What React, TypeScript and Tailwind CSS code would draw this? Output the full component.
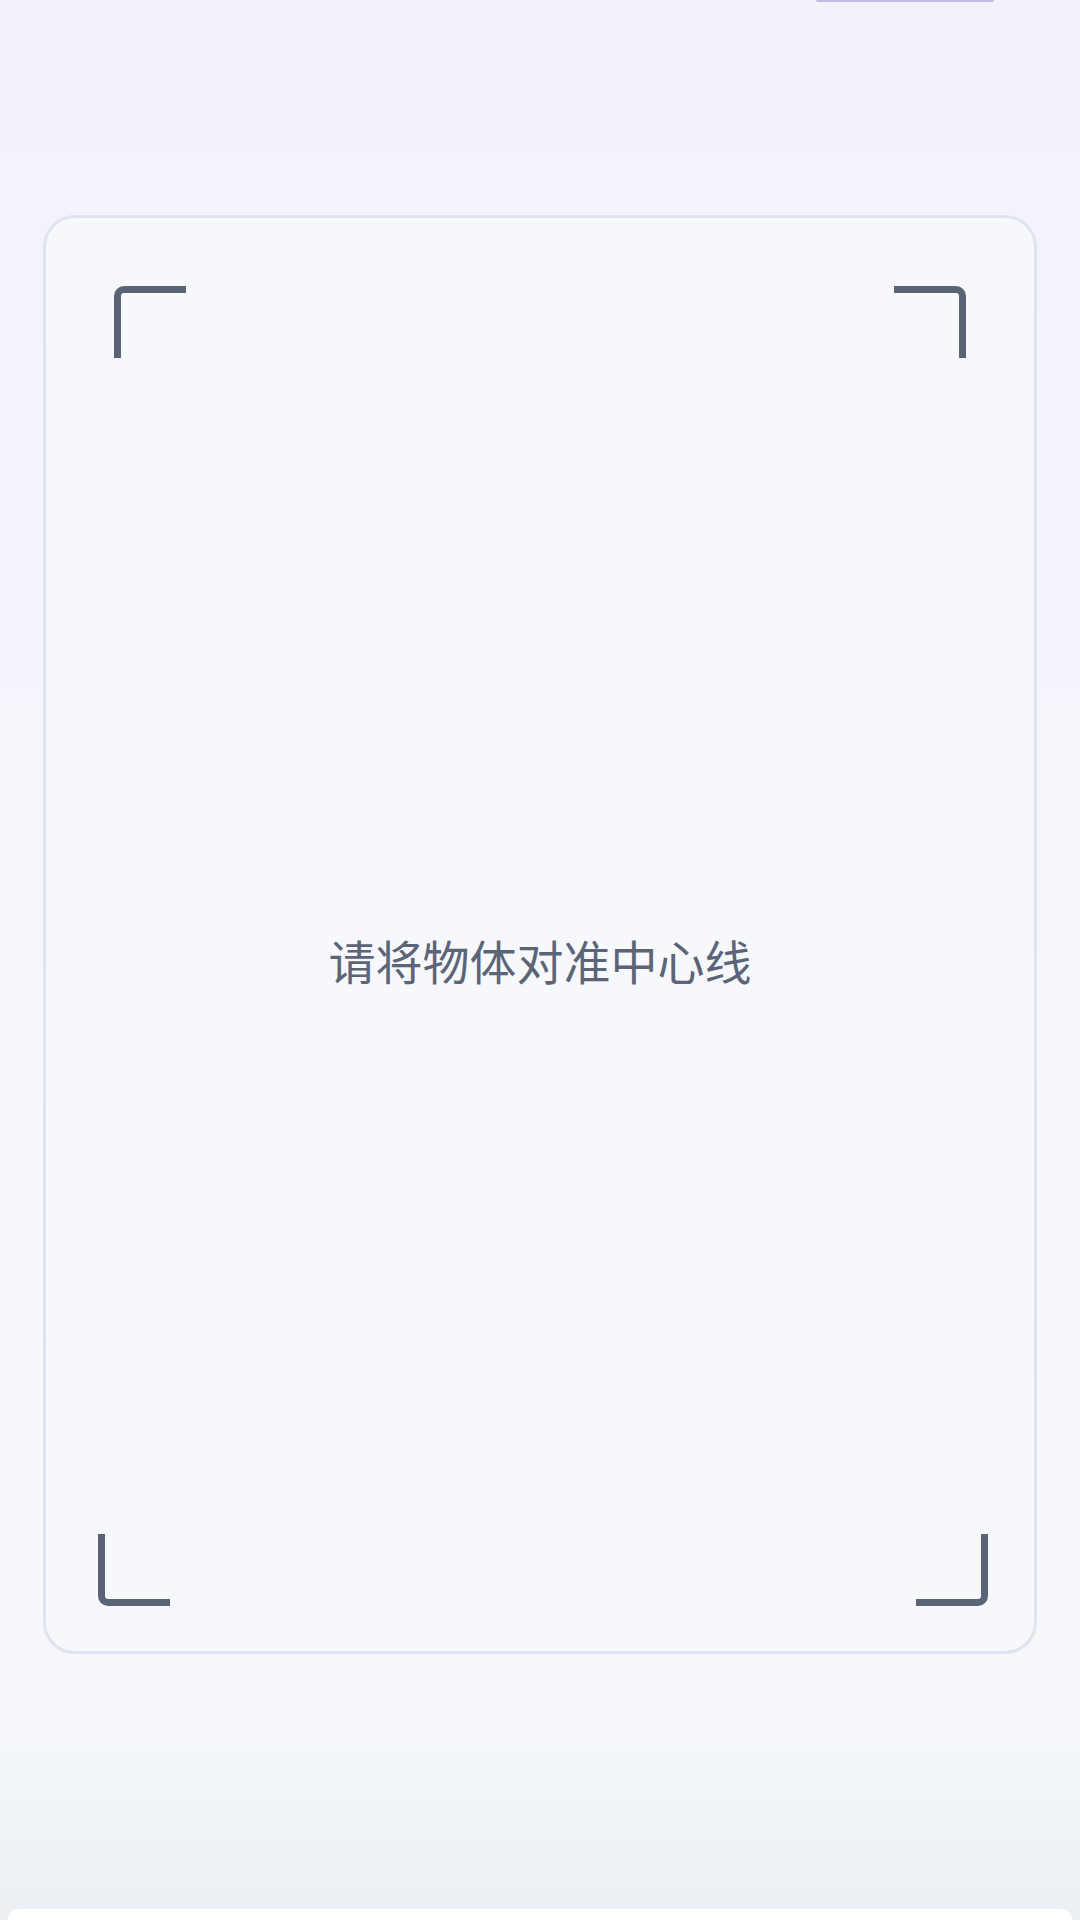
import React from "react";

function Bracket({ corner }: { corner: "tl" | "tr" | "bl" | "br" }) {
  const cls = {
    tl: "border-t-[7px] border-l-[7px] rounded-tl-[10px]",
    tr: "border-t-[7px] border-r-[7px] rounded-tr-[10px]",
    bl: "border-b-[7px] border-l-[7px] rounded-bl-[10px]",
    br: "border-b-[7px] border-r-[7px] rounded-br-[10px]",
  }[corner];
  return <div className={`w-[72px] h-[72px] shrink-0 border-[#5a6477] ${cls}`} />;
}

export default function App() {
  return (
    <div
      className="relative w-[1080px] h-[1920px] overflow-hidden flex flex-col bg-[linear-gradient(180deg,#f3f1fc_0%,#f5f3fd_20%,#f5f6fc_45%,#f7f8fc_70%,#f5f7fb_90%,#eceff4_99%)]"
      style={{ fontFamily: '"Noto Sans CJK SC", "Noto Sans", sans-serif' }}
    >
      {/* top-right cut-off button edge */}
      <div className="absolute top-0 left-[816px] w-[178px] h-[2px] rounded-b-[2px] bg-[#c3bde2]" />

      <div className="h-[215px] shrink-0" />

      <div className="mx-[43px] h-[1439px] shrink-0 rounded-[32px] border-[3px] border-[#dfe3ee] bg-[#f6f8fc] flex flex-col">
        <div className="flex justify-between px-[68px] pt-[68px]">
          <Bracket corner="tl" />
          <Bracket corner="tr" />
        </div>
        <div className="flex-1 flex items-center justify-center">
          <div className="pt-[26px] text-[47px] leading-none text-[#5b6577]">
            请将物体对准中心线
          </div>
        </div>
        <div className="flex justify-between pl-[52px] pr-[46px] pb-[45px]">
          <Bracket corner="bl" />
          <Bracket corner="br" />
        </div>
      </div>

      <div className="flex-1" />

      <div className="mx-[8px] h-[11px] shrink-0 rounded-t-[30px] bg-white" />
    </div>
  );
}
